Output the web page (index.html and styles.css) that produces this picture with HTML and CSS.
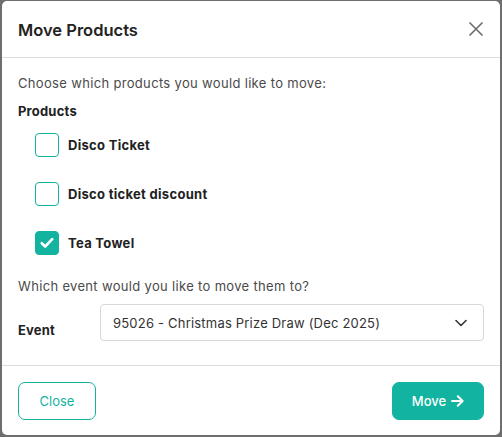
FILE: index.html
```html
<!DOCTYPE html>
<html>
<head>
<meta charset="utf-8">
<link rel="stylesheet" href="styles.css">
</head>
<body>
<div class="modal">
  <div class="modal-header">
    <h2 class="title">Move Products</h2>
    <button class="close-x" aria-label="Close">
      <svg width="16" height="16" viewBox="0 0 16 16"><path d="M1.5 1.5L14.5 14.5M14.5 1.5L1.5 14.5" stroke="#6c6c6c" stroke-width="1.6" fill="none"/></svg>
    </button>
  </div>
  <div class="modal-body">
    <p class="intro">Choose which products you would like to move:</p>
    <div class="group-label">Products</div>
    <div class="checks">
      <label class="check"><span class="box"></span><span class="check-label">Disco Ticket</span></label>
      <label class="check"><span class="box"></span><span class="check-label">Disco ticket discount</span></label>
      <label class="check"><span class="box checked"><svg width="14" height="12" viewBox="0 0 14 12"><path d="M1.8 6.2L5.2 9.5L12.2 2.2" stroke="#fff" stroke-width="2.6" fill="none" stroke-linecap="round" stroke-linejoin="round"/></svg></span><span class="check-label">Tea Towel</span></label>
    </div>
    <p class="intro second">Which event would you like to move them to?</p>
    <div class="event-row">
      <div class="event-label">Event</div>
      <div class="select">
        <span class="select-text">95026 - Christmas Prize Draw (Dec 2025)</span>
        <svg width="12" height="8" viewBox="0 0 12 8"><path d="M1 1.5L6 6.5L11 1.5" stroke="#333" stroke-width="1.6" fill="none" stroke-linecap="round" stroke-linejoin="round"/></svg>
      </div>
    </div>
  </div>
  <div class="modal-footer">
    <button class="btn btn-outline">Close</button>
    <button class="btn btn-primary">Move <svg width="13" height="12" viewBox="0 0 13 12"><path d="M1 6H11.5M6.8 1.2L11.6 6L6.8 10.8" stroke="#fff" stroke-width="2" fill="none" stroke-linecap="round" stroke-linejoin="round"/></svg></button>
  </div>
</div>
</body>
</html>
```
FILE: styles.css
```css
html, body {
  margin: 0;
  padding: 0;
  height: 100%;
}
body {
  background: #6e6e6e;
  font-family: "Inter", "Open Sans", sans-serif;
  color: #212529;
  padding: 1px 2px 2px 2px;
  box-sizing: border-box;
}
.modal {
  width: 498px;
  height: 434px;
  background: #fff;
  border-radius: 5px;
  display: flex;
  flex-direction: column;
  overflow: hidden;
}
.modal-header {
  height: 56px;
  flex: 0 0 auto;
  display: flex;
  align-items: center;
  justify-content: space-between;
  padding: 0 16px;
  border-bottom: 1px solid #dcdcdc;
}
.title {
  margin: 0;
  font-size: 16.5px;
  font-weight: 600;
  color: #222;
  padding-top: 1px;
}
.close-x {
  border: 0;
  background: none;
  padding: 0;
  width: 16px;
  height: 16px;
  margin-right: 0;
  display: flex;
}
.modal-body {
  flex: 1 1 auto;
  padding: 15px 16px 0 16px;
  border-bottom: 1px solid #dcdcdc;
}
.intro {
  margin: 0;
  font-size: 13px;
  line-height: 20px;
  color: #4a4a4a;
  letter-spacing: 0.33px;
}
.group-label {
  margin-top: 8px;
  font-size: 13px;
  line-height: 20px;
  font-weight: 700;
  color: #222;
  letter-spacing: 0.2px;
}
.checks {
  margin-top: 12px;
  padding-left: 17px;
  display: flex;
  flex-direction: column;
  gap: 25px;
}
.check {
  display: flex;
  align-items: center;
  gap: 9px;
  height: 24px;
}
.box {
  width: 24px;
  height: 24px;
  box-sizing: border-box;
  border: 1px solid #14b39f;
  border-radius: 4px;
  display: flex;
  align-items: center;
  justify-content: center;
}
.box.checked {
  background: #14b39f;
}
.check-label {
  font-size: 13px;
  font-weight: 700;
  color: #222;
  letter-spacing: 0.3px;
}
.second {
  margin-top: 21px;
}
.event-row {
  margin-top: 8px;
  display: flex;
}
.event-label {
  width: 82px;
  flex: 0 0 auto;
  font-size: 13px;
  font-weight: 700;
  color: #222;
  line-height: 20px;
  padding-top: 16px;
  letter-spacing: 0.2px;
}
.select {
  flex: 1 1 auto;
  height: 37px;
  box-sizing: border-box;
  border: 1px solid #d5d8dc;
  border-radius: 4px;
  display: flex;
  align-items: center;
  justify-content: space-between;
  padding: 0 16px 0 12px;
}
.select-text {
  font-size: 13px;
  color: #333;
  letter-spacing: 0.2px;
}
.modal-footer {
  flex: 0 0 auto;
  height: 69px;
  box-sizing: border-box;
  display: flex;
  align-items: flex-start;
  justify-content: space-between;
  padding: 16px 16px 0 16px;
}
.btn {
  height: 38px;
  box-sizing: border-box;
  border-radius: 7px;
  font-family: inherit;
  font-size: 13px;
  display: flex;
  align-items: center;
  justify-content: center;
  gap: 5px;
}
.btn-outline {
  width: 78px;
  background: #fff;
  border: 1px solid #14b39f;
  color: #14b39f;
}
.btn-primary {
  width: 92px;
  background: #12b3a0;
  border: 1px solid #12b3a0;
  color: #fff;
  font-weight: 500;
}
```
